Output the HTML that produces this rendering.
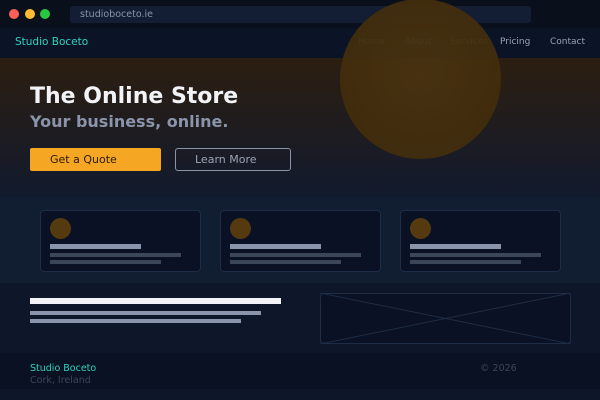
<!DOCTYPE html>
<html><head><meta charset="utf-8"><style>
*{margin:0;padding:0;box-sizing:border-box}
body{width:600px;height:400px;overflow:hidden;background:#0e172a;font-family:"DejaVu Sans","Liberation Sans",sans-serif;position:relative}
.abs{position:absolute}
</style></head><body>
<div class="abs" style="left:0;top:0;width:600px;height:28px;background:#0a0f1c"></div>
<div class="abs" style="left:9px;top:9px;width:10px;height:10px;border-radius:50%;background:#ff5f57"></div>
<div class="abs" style="left:25px;top:9px;width:10px;height:10px;border-radius:50%;background:#febc2e"></div>
<div class="abs" style="left:40px;top:9px;width:10px;height:10px;border-radius:50%;background:#28c840"></div>
<div class="abs" style="left:70px;top:6px;width:461px;height:17px;border-radius:3px;background:#131d33;color:#8a94aa;font-size:9.5px;line-height:17px;padding-left:10px">studioboceto.ie</div>
<div class="abs" style="left:0;top:28px;width:600px;height:30px;background:#0b1327"></div>
<div class="abs" style="left:15px;top:36px;color:#2dd4bf;font-size:10.5px">Studio Boceto</div>
<div class="abs" style="left:358px;top:37px;color:#9aa3b5;font-size:9px">Home</div>
<div class="abs" style="left:405px;top:37px;color:#9aa3b5;font-size:9px">About</div>
<div class="abs" style="left:450px;top:37px;color:#9aa3b5;font-size:9px">Services</div>
<div class="abs" style="left:500px;top:37px;color:#9aa3b5;font-size:9px">Pricing</div>
<div class="abs" style="left:550px;top:37px;color:#9aa3b5;font-size:9px">Contact</div>
<div class="abs" style="left:0;top:58px;width:600px;height:140px;background:linear-gradient(#2c1e10,#111a2e)"></div>
<div class="abs" style="left:30px;top:84px;color:#f1f3f7;font-size:22px;font-weight:bold">The Online Store</div>
<div class="abs" style="left:30px;top:112px;color:#8a94aa;font-size:16px;font-weight:bold">Your business, online.</div>
<div class="abs" style="left:30px;top:148px;width:131px;height:23px;background:#f5a623;border-radius:2px;color:#2a1a05;font-size:11px;line-height:23px;padding-left:20px">Get a Quote</div>
<div class="abs" style="left:175px;top:148px;width:116px;height:23px;border:1px solid #8a94aa;border-radius:3px;color:#9aa3b5;font-size:11px;line-height:21px;padding-left:19px">Learn More</div>
<div class="abs" style="left:340px;top:-1px;width:161px;height:160px;border-radius:50%;background:radial-gradient(circle at 50% 48%,rgba(72,50,16,0.94),rgba(66,45,12,0.94) 70%,rgba(72,48,10,0.96));"></div>
<div class="abs" style="left:0;top:198px;width:600px;height:85px;background:#111d31"></div>
<div class="abs" style="left:40px;top:210px;width:161px;height:62px;background:#0b1124;border:1px solid #1e2c45;border-radius:4px"></div>
<div class="abs" style="left:220px;top:210px;width:161px;height:62px;background:#0b1124;border:1px solid #1e2c45;border-radius:4px"></div>
<div class="abs" style="left:400px;top:210px;width:161px;height:62px;background:#0b1124;border:1px solid #1e2c45;border-radius:4px"></div>
<div class="abs" style="left:50px;top:218px;width:21px;height:21px;border-radius:50%;background:#553a10"></div>
<div class="abs" style="left:230px;top:218px;width:21px;height:21px;border-radius:50%;background:#553a10"></div>
<div class="abs" style="left:410px;top:218px;width:21px;height:21px;border-radius:50%;background:#553a10"></div>
<div class="abs" style="left:50px;top:244px;width:91px;height:5px;background:#8a94aa"></div>
<div class="abs" style="left:50px;top:253px;width:131px;height:4px;background:#3b4658"></div>
<div class="abs" style="left:50px;top:260px;width:111px;height:4px;background:#3b4658"></div>
<div class="abs" style="left:230px;top:244px;width:91px;height:5px;background:#8a94aa"></div>
<div class="abs" style="left:230px;top:253px;width:131px;height:4px;background:#3b4658"></div>
<div class="abs" style="left:230px;top:260px;width:111px;height:4px;background:#3b4658"></div>
<div class="abs" style="left:410px;top:244px;width:91px;height:5px;background:#8a94aa"></div>
<div class="abs" style="left:410px;top:253px;width:131px;height:4px;background:#3b4658"></div>
<div class="abs" style="left:410px;top:260px;width:111px;height:4px;background:#3b4658"></div>
<div class="abs" style="left:0;top:283px;width:600px;height:70px;background:#0e172a"></div>
<div class="abs" style="left:30px;top:298px;width:251px;height:6px;background:#f1f3f7"></div>
<div class="abs" style="left:30px;top:311px;width:231px;height:4px;background:#8a94aa"></div>
<div class="abs" style="left:30px;top:319px;width:211px;height:4px;background:#8a94aa"></div>
<svg class="abs" style="left:320px;top:293px" width="251" height="51"><rect x="0.5" y="0.5" width="250" height="50" rx="3" fill="#0b1124" stroke="#1e2c45"/><line x1="0" y1="0" x2="251" y2="51" stroke="#1e2c45"/><line x1="0" y1="51" x2="251" y2="0" stroke="#1e2c45"/></svg>
<div class="abs" style="left:0;top:353px;width:600px;height:36px;background:#0a1122"></div>
<div class="abs" style="left:30px;top:363px;color:#2dd4bf;font-size:9.5px">Studio Boceto</div>
<div class="abs" style="left:30px;top:375px;color:#3b4658;font-size:9.5px">Cork, Ireland</div>
<div class="abs" style="left:480px;top:363px;color:#3b4658;font-size:9.5px">© 2026</div>
</body></html>
